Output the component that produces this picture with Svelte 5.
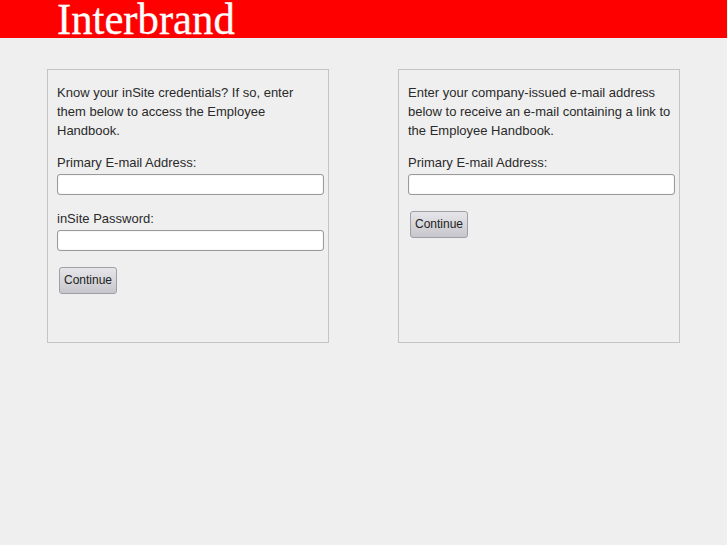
<script>
  const panels = [
    {
      intro: 'Know your inSite credentials? If so, enter them below to access the Employee Handbook.',
      fields: [
        { label: 'Primary E-mail Address:', type: 'text' },
        { label: 'inSite Password:', type: 'password' },
      ],
    },
    {
      intro: 'Enter your company-issued e-mail address below to receive an e-mail containing a link to the Employee Handbook.',
      fields: [{ label: 'Primary E-mail Address:', type: 'text' }],
    },
  ];
</script>

<style>
  :global(body) {
    background-color: #efefef;
    font-family: 'Liberation Sans', Arial, sans-serif;
  }

  main {
    min-height: 545px;
    background-color: #efefef;
  }

  .header {
    height: 38px;
    padding-left: 57px;
    background-color: #ff0000;
  }

  .logo {
    display: block;
    height: 38px;
    color: white;
    font-family: 'Liberation Serif', 'Times New Roman', serif;
    font-size: 44px;
    line-height: 40px;
    -webkit-text-stroke: 0.3px white;
    transform: scaleX(0.97);
    transform-origin: left center;
  }

  .panels {
    display: flex;
    gap: 69px;
    padding: 31px 0 0 47px;
  }

  .panel {
    width: 282px;
    height: 274px;
    box-sizing: border-box;
    padding: 13px 3px 0 9px;
    border: 1px solid #c4c4c4;
    color: #2a2a2a;
    font-size: 13px;
    line-height: 19px;
  }

  .intro {
    margin: 0 0 13px;
    width: 264px;
  }

  .field {
    margin-bottom: 14px;
  }

  label {
    display: block;
  }

  input {
    display: block;
    width: 267px;
    height: 21px;
    margin-top: 2px;
    box-sizing: border-box;
    background-color: white;
    border: 1px solid #9a9a9a;
    border-radius: 3px;
    box-shadow: inset 0 0 1px #bbb;
  }

  button {
    display: block;
    width: 58px;
    height: 27px;
    margin: 16px 0 0 2px;
    padding: 0 0 2px;
    color: #222;
    font-family: inherit;
    font-size: 12px;
    background: linear-gradient(#e6e6ea, #c6c6cc);
    border: 1px solid #a0a0a4;
    border-radius: 3px;
  }
</style>

<main>
  <div class="header">
    <span class="logo">Interbrand</span>
  </div>

  <div class="panels">
    {#each panels as panel}
      <div class="panel">
        <p class="intro">{panel.intro}</p>
        {#each panel.fields as field}
          <div class="field">
            <label>
              {field.label}
              <input type={field.type} />
            </label>
          </div>
        {/each}
        <button>Continue</button>
      </div>
    {/each}
  </div>
</main>
